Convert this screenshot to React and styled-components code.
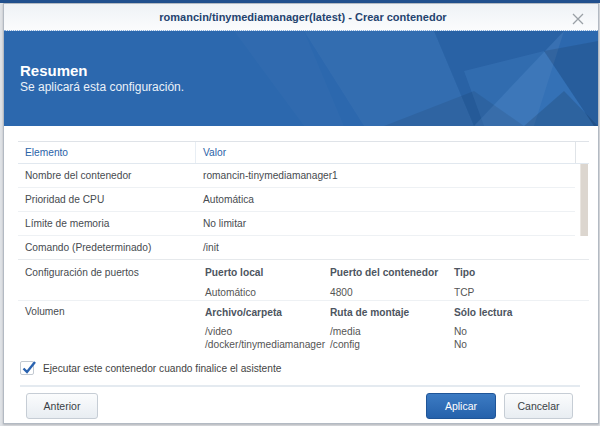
import React from "react";
import styled, { createGlobalStyle } from "styled-components";

const Global = createGlobalStyle`
  html, body { margin: 0; padding: 0; }
  body {
    width: 600px;
    height: 426px;
    overflow: hidden;
    background: linear-gradient(to bottom, #21508e 0 3px, #dfe2e6 3px);
    font-family: "Liberation Sans", Arial, sans-serif;
  }
`;

const Page = styled.div`
  padding: 3px 0 0 3px;
`;

const Dialog = styled.div`
  width: 594px;
  height: 419px;
  border: 1px solid #b3bac3;
  background: #fff;
  display: flex;
  flex-direction: column;
  box-shadow: 0 1px 2px rgba(0, 0, 0, 0.2);
`;

const TitleBar = styled.div`
  height: 26px;
  flex: none;
  position: relative;
  display: flex;
  align-items: center;
  justify-content: center;
  background: linear-gradient(to bottom, #eef2f6, #fbfcfd);
  border-bottom: 1px dotted #86aee0;
`;

const Title = styled.div`
  font-size: 11px;
  font-weight: bold;
  color: #24436f;
  padding-left: 4px;
`;

const Close = styled.div`
  position: absolute;
  right: 14px;
  top: 7px;
  width: 12px;
  height: 12px;
`;

const Banner = styled.div`
  height: 95px;
  flex: none;
  position: relative;
  background: #2c68ae;
  overflow: hidden;
`;

const BannerArt = styled.svg`
  position: absolute;
  left: 0;
  top: 0;
`;

const BannerText = styled.div`
  position: relative;
  padding: 31px 0 0 16px;
  color: #fff;
`;

const Heading = styled.div`
  font-size: 15px;
  font-weight: bold;
  line-height: 18px;
`;

const Sub = styled.div`
  font-size: 12px;
  line-height: 15px;
  color: #eaf1f9;
`;

const Body = styled.div`
  flex: 1;
  display: flex;
  flex-direction: column;
  padding: 15px 10px 0 14px;
`;

const Table = styled.div`
  width: 571px;
  border-top: 1px solid #dfe3e8;
  font-size: 10.2px;
  color: #474b50;
`;

const HeadRow = styled.div`
  display: grid;
  grid-template-columns: 178px 380px 13px;
  height: 21px;
  border-bottom: 1px solid #e1e8ef;
`;

const HeadCell = styled.div`
  display: flex;
  align-items: center;
  padding-left: 7px;
  color: #2b63a8;
  border-right: 1px solid ${(p) => (p.$light ? "#e8eef4" : "#e0e4e8")};
  &:last-child { border-right: none; }
`;

const ScrollArea = styled.div`
  display: flex;
`;

const ScrollRows = styled.div`
  flex: 1;
`;

const Track = styled.div`
  width: 7px;
  margin: 0 1px 0 5px;
  background: #dcd6cf;
  border-left: 1px solid #e9e5e0;
`;

const Row = styled.div`
  display: grid;
  grid-template-columns: 178px 1fr;
  height: 23px;
  border-bottom: 1px solid ${(p) => (p.$strong ? "#e6e9ec" : "#eef1f4")};
`;

const Cell = styled.div`
  display: flex;
  align-items: center;
  padding-left: 7px;
  white-space: nowrap;
`;

const Section = styled.div`
  display: grid;
  grid-template-columns: 178px 1fr;
  padding: ${(p) => p.$pt}px 0 ${(p) => p.$pb}px;
  border-bottom: ${(p) => (p.$last ? "none" : "1px solid #eef1f4")};
`;

const SectionLabel = styled.div`
  padding-left: 7px;
  line-height: 13px;
`;

const SubTable = styled.div`
  display: grid;
  grid-template-columns: 125px 124px 1fr;
  padding-left: 9px;
  padding-top: ${(p) => p.$pt || 0}px;
  align-content: start;
`;

const SubHead = styled.div`
  font-weight: bold;
  color: #4d5560;
  line-height: 14px;
  margin-bottom: ${(p) => p.$gap}px;
`;

const SubVal = styled.div`
  line-height: 13px;
  white-space: nowrap;
  color: #555;
`;

const CheckLine = styled.label`
  display: flex;
  align-items: center;
  gap: 9px;
  margin: 10px 0 0 2px;
  font-size: 10.2px;
  color: #444;
`;

const Box = styled.span`
  width: 14px;
  height: 14px;
  box-sizing: border-box;
  border: 1px solid #c2c9d1;
  border-radius: 2px;
  background: #fff;
  position: relative;
  flex: none;
`;

const Tick = styled.svg`
  position: absolute;
  left: 0;
  top: -3px;
`;

const Divider = styled.div`
  height: 2px;
  background: #e4eaf0;
  margin: 10px 8px 0 2px;
`;

const Footer = styled.div`
  display: flex;
  align-items: center;
  gap: 8px;
  padding: 6px 25px 0 22px;
`;

const Button = styled.button`
  height: 26px;
  padding: 0;
  width: ${(p) => p.$w}px;
  font-family: inherit;
  font-size: 10.5px;
  border-radius: 3px;
  border: 1px solid ${(p) => (p.$primary ? "#1f5598" : "#c6cdd5")};
  color: ${(p) => (p.$primary ? "#fff" : "#3a3f45")};
  background: ${(p) =>
    p.$primary
      ? "linear-gradient(to bottom, #3c7bc3, #2561ab)"
      : "linear-gradient(to bottom, #fbfcfd, #e8edf2)"};
`;

const Spacer = styled.div`
  flex: 1;
`;

const mainRows = [
  ["Nombre del contenedor", "romancin-tinymediamanager1"],
  ["Prioridad de CPU", "Automática"],
  ["Límite de memoria", "No limitar"],
];

export default function App() {
  return (
    <Page>
      <Global />
      <Dialog>
        <TitleBar>
          <Title>romancin/tinymediamanager(latest) - Crear contenedor</Title>
          <Close>
            <svg width="12" height="12" viewBox="0 0 12 12">
              <path d="M1 1L11 11M11 1L1 11" stroke="#9aa0a6" strokeWidth="1.3" />
            </svg>
          </Close>
        </TitleBar>

        <Banner>
          <BannerArt width="594" height="95" viewBox="0 0 594 95">
            <polygon points="300,0 430,0 470,95 360,95" fill="#fff" opacity="0.035" />
            <polygon points="430,0 560,0 470,95" fill="#000" opacity="0.05" />
            <polygon points="470,95 560,0 530,95" fill="#fff" opacity="0.06" />
            <polygon points="460,40 540,20 590,95 480,95" fill="#4a8ad0" opacity="0.25" />
            <polygon points="540,20 594,10 594,95 590,95" fill="#000" opacity="0.1" />
            <polygon points="380,95 470,60 520,95" fill="#000" opacity="0.08" />
            <polygon points="520,95 560,60 594,95" fill="#000" opacity="0.12" />
            <polygon points="230,0 300,0 340,95 300,95" fill="#fff" opacity="0.02" />
          </BannerArt>
          <BannerText>
            <Heading>Resumen</Heading>
            <Sub>Se aplicará esta configuración.</Sub>
          </BannerText>
        </Banner>

        <Body>
          <Table>
            <HeadRow>
              <HeadCell $light>Elemento</HeadCell>
              <HeadCell>Valor</HeadCell>
              <HeadCell />
            </HeadRow>
            <ScrollArea>
              <ScrollRows>
                {mainRows.map(([k, v]) => (
                  <Row key={k}>
                    <Cell>{k}</Cell>
                    <Cell>{v}</Cell>
                  </Row>
                ))}
              </ScrollRows>
              <Track />
            </ScrollArea>
            <Row $strong>
              <Cell>Comando (Predeterminado)</Cell>
              <Cell>/init</Cell>
            </Row>

            <Section $pt={6} $pb={1}>
              <SectionLabel>Configuración de puertos</SectionLabel>
              <SubTable>
                <SubHead $gap={6}>Puerto local</SubHead>
                <SubHead $gap={6}>Puerto del contenedor</SubHead>
                <SubHead $gap={6}>Tipo</SubHead>
                <SubVal>Automático</SubVal>
                <SubVal>4800</SubVal>
                <SubVal>TCP</SubVal>
              </SubTable>
            </Section>

            <Section $pt={4} $pb={0} $last>
              <SectionLabel>Volumen</SectionLabel>
              <SubTable $pt={1}>
                <SubHead $gap={5}>Archivo/carpeta</SubHead>
                <SubHead $gap={5}>Ruta de montaje</SubHead>
                <SubHead $gap={5}>Sólo lectura</SubHead>
                <SubVal>/video</SubVal>
                <SubVal>/media</SubVal>
                <SubVal>No</SubVal>
                <SubVal>/docker/tinymediamanager</SubVal>
                <SubVal>/config</SubVal>
                <SubVal>No</SubVal>
              </SubTable>
            </Section>
          </Table>

          <CheckLine>
            <Box>
              <Tick width="16" height="16" viewBox="0 0 16 16">
                <path d="M2.5 9.5L6 13L14 3" fill="none" stroke="#2a63b0" strokeWidth="2.4" />
              </Tick>
            </Box>
            Ejecutar este contenedor cuando finalice el asistente
          </CheckLine>
          <Divider />
        </Body>

        <Footer>
          <Button $w={72}>Anterior</Button>
          <Spacer />
          <Button $primary $w={70}>Aplicar</Button>
          <Button $w={69}>Cancelar</Button>
        </Footer>
        <Spacer />
      </Dialog>
    </Page>
  );
}
